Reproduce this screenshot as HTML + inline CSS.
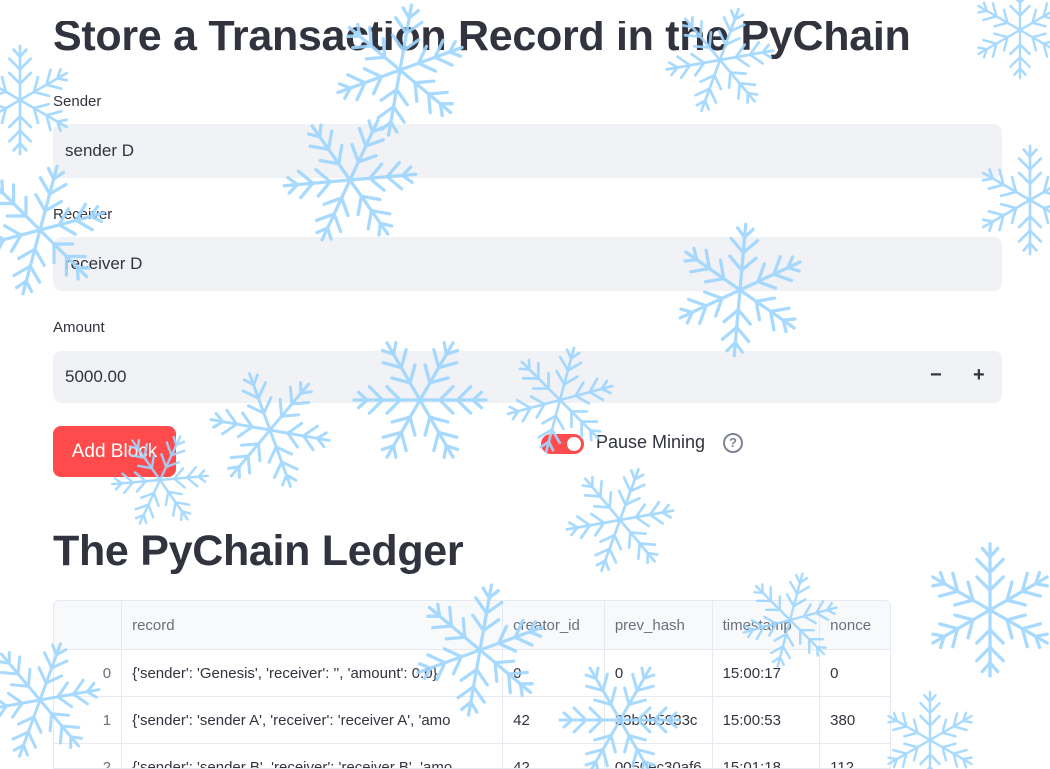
<!DOCTYPE html>
<html><head><meta charset="utf-8"><style>
*{box-sizing:border-box;margin:0;padding:0}
body{width:1050px;height:769px;overflow:hidden;background:#fff;font-family:"Liberation Sans",sans-serif;color:#31333f;position:relative}
.abs{position:absolute}
h1{position:absolute;left:53px;font-size:43px;font-weight:bold;color:#31333f;letter-spacing:-0.3px;white-space:nowrap}
.lbl{position:absolute;left:53px;font-size:15px;color:#31333f}
.inp{position:absolute;left:53px;width:949px;background:#f0f2f6;border-radius:8px;font-size:17px;padding-left:12px;display:flex;align-items:center}
table{position:absolute;left:53px;top:600px;border-collapse:collapse;font-size:15px;width:838px}
td,th{border:1px solid #e6e9ef;height:47px;padding:0 10px;white-space:nowrap;overflow:hidden;text-align:left;font-weight:normal}
th{background:#f8f9fb;color:#6b6f7b;height:49px}
.tw{position:absolute;left:53px;top:600px;width:838px;height:169px;overflow:hidden;border:1px solid #e6e9ef;border-radius:6px 6px 0 0}
.tw table{left:-1px;top:-1px}
</style></head><body>
<h1 style="top:12px">Store a Transaction Record in the PyChain</h1>
<div class="abs" style="left:0;top:0;width:1050px;height:21px;background:#fff"></div>
<div class="lbl" style="top:93px">Sender</div>
<div class="inp" style="top:124px;height:54px">sender D</div>
<div class="lbl" style="top:206px">Receiver</div>
<div class="inp" style="top:237px;height:54px">receiver D</div>
<div class="lbl" style="top:319px">Amount</div>
<div class="inp" style="top:351px;height:52px">5000.00
<span class="abs" style="left:877px;top:13px;font-size:20px;font-weight:bold">−</span>
<span class="abs" style="left:920px;top:13px;font-size:20px;font-weight:bold">+</span></div>
<div class="abs" style="left:53px;top:426px;width:123px;height:51px;background:#ff4b4b;border-radius:8px;color:#fff;font-size:19px;display:flex;align-items:center;justify-content:center">Add Block</div>
<div class="abs" style="left:541px;top:434px;width:43px;height:20px;background:#ff4b4b;border-radius:10px"><div class="abs" style="right:3px;top:3px;width:14px;height:14px;border-radius:50%;background:#fff"></div></div>
<div class="abs" style="left:596px;top:432px;font-size:18px">Pause Mining</div>
<div class="abs" style="left:723px;top:433px;width:20px;height:20px;border:2px solid #808495;border-radius:50%;font-size:13px;font-weight:bold;color:#808495;text-align:center;line-height:16px">?</div>
<h1 style="top:527px">The PyChain Ledger</h1>
<div class="tw"><table>
<tr><th style="width:69px"></th><th style="width:382px">record</th><th style="width:102px">creator_id</th><th style="width:106px">prev_hash</th><th style="width:108px">timestamp</th><th style="width:71px">nonce</th></tr>
<tr><td style="text-align:right;color:#6b6f7b">0</td><td>{'sender': 'Genesis', 'receiver': '', 'amount': 0.0}</td><td>0</td><td>0</td><td>15:00:17</td><td>0</td></tr>
<tr><td style="text-align:right;color:#6b6f7b">1</td><td>{'sender': 'sender A', 'receiver': 'receiver A', 'amo</td><td>42</td><td>33b9b5933c</td><td>15:00:53</td><td>380</td></tr>
<tr><td style="text-align:right;color:#6b6f7b">2</td><td>{'sender': 'sender B', 'receiver': 'receiver B', 'amo</td><td>42</td><td>0050ec30af6</td><td>15:01:18</td><td>112</td></tr>
</table></div>
<svg class="abs" style="left:0;top:0" width="1050" height="769" fill="none" stroke="#9fd6ff" stroke-width="3" stroke-linecap="round" opacity="0.9">
<defs><g id="arm"><line x1="0" y1="0" x2="0" y2="-60"/><path d="M0 -18 L-12 -30 M0 -18 L12 -30 M0 -34 L-12 -46 M0 -34 L12 -46 M0 -48 L-7 -56 M0 -48 L7 -56"/></g>
<g id="f"><use href="#arm"/><use href="#arm" transform="rotate(60)"/><use href="#arm" transform="rotate(120)"/><use href="#arm" transform="rotate(180)"/><use href="#arm" transform="rotate(240)"/><use href="#arm" transform="rotate(300)"/></g></defs>
<use href="#f" transform="translate(400,70) scale(1.1) rotate(10)"/>
<use href="#f" transform="translate(350,180) scale(1.1) rotate(25)"/>
<use href="#f" transform="translate(40,230) scale(1.1) rotate(15)"/>
<use href="#f" transform="translate(20,100) scale(0.9)"/>
<use href="#f" transform="translate(720,60) scale(0.9) rotate(20)"/>
<use href="#f" transform="translate(1030,200) scale(0.9)"/>
<use href="#f" transform="translate(740,290) scale(1.1) rotate(5)"/>
<use href="#f" transform="translate(420,400) scale(1.1) rotate(30)"/>
<use href="#f" transform="translate(560,400) scale(0.9) rotate(15)"/>
<use href="#f" transform="translate(270,430) scale(1) rotate(40)"/>
<use href="#f" transform="translate(620,520) scale(0.9) rotate(20)"/>
<use href="#f" transform="translate(990,610) scale(1.1)"/>
<use href="#f" transform="translate(480,650) scale(1.1) rotate(10)"/>
<use href="#f" transform="translate(620,720) scale(1) rotate(30)"/>
<use href="#f" transform="translate(40,700) scale(1) rotate(20)"/>
<use href="#f" transform="translate(930,740) scale(0.8)"/>
<use href="#f" transform="translate(1020,30) scale(0.8)"/>
<use href="#f" transform="translate(160,480) scale(0.8) rotate(25)"/>
<use href="#f" transform="translate(790,620) scale(0.8) rotate(15)"/>
</svg>
</body></html>
